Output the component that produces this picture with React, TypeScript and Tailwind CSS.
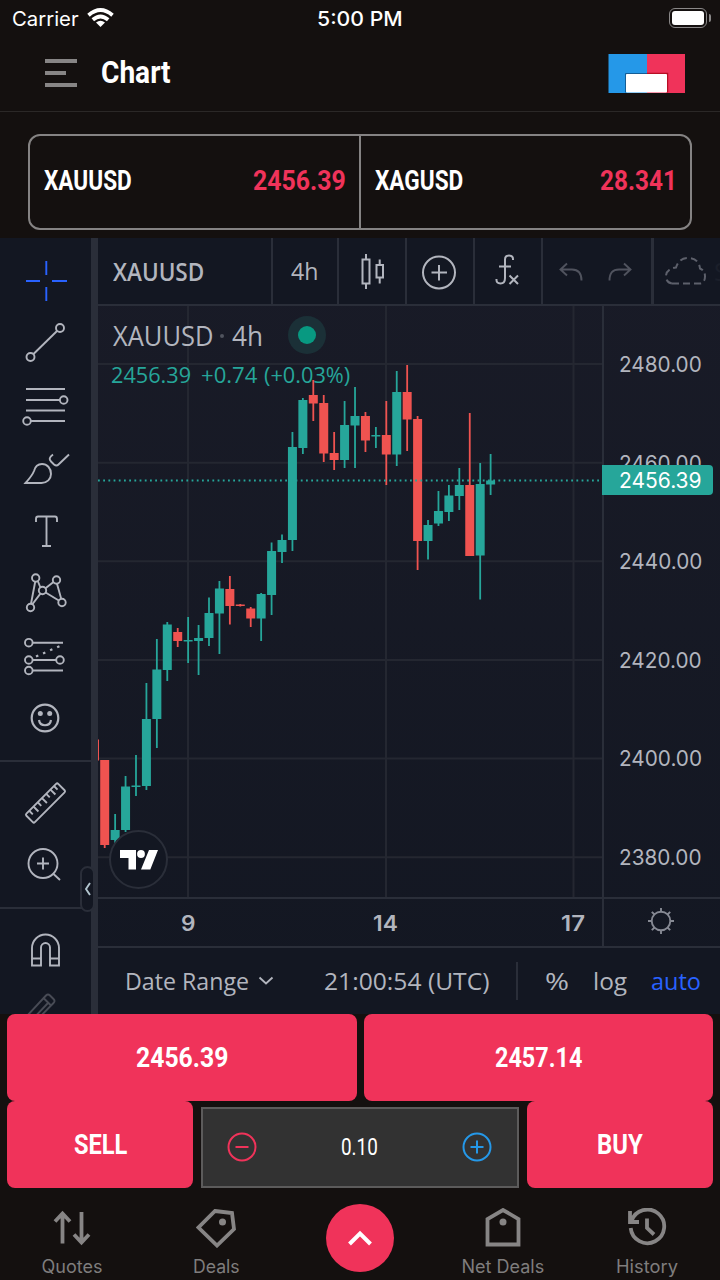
import React, { useLayoutEffect, useRef, useState } from 'react';

interface FitTextProps {
  width: number;
  className?: string;
  children: React.ReactNode;
}

// Squeezes a line of text horizontally so it takes exactly `width` pixels
const FitText: React.FC<FitTextProps> = ({ width, className = '', children }) => {
  const ref = useRef<HTMLSpanElement>(null);
  const [scale, setScale] = useState(1);

  useLayoutEffect(() => {
    if (ref.current && ref.current.offsetWidth > 0) {
      setScale(width / ref.current.offsetWidth);
    }
  }, [width, children]);

  return (
    <span className="flex shrink-0" style={{ width }}>
      <span
        ref={ref}
        className={`block shrink-0 origin-left whitespace-pre ${className}`}
        style={{ transform: `scaleX(${scale})` }}
      >
        {children}
      </span>
    </span>
  );
};

// x step between candles and the first candle's centre, inside the plot
const STEP = 10.43;
const FIRST = 6.7;

// [up, high, body top, body bottom, low]
const candles: [number, number, number, number, number][] = [
  [0, 760, 760, 845, 848],
  [1, 814, 830, 840, 843],
  [1, 776, 786.5, 830, 832],
  [1, 755, 785.5, 787, 796],
  [1, 683, 719, 786, 790],
  [1, 639, 669.5, 719, 748],
  [1, 622, 624.5, 670, 681],
  [0, 628, 632, 641, 647],
  [1, 617, 640, 641.5, 663],
  [1, 625, 638, 641, 675],
  [1, 597.5, 613, 638, 646],
  [1, 581, 588.5, 613.5, 654],
  [0, 576, 589, 606, 624.5],
  [0, 604, 604.5, 606, 606.5],
  [0, 607, 608.5, 618.5, 627],
  [1, 593, 594, 618.5, 641],
  [1, 542.5, 551, 595, 615],
  [1, 534.5, 540, 552, 563],
  [1, 432, 447, 540, 551],
  [1, 398, 400, 448, 454],
  [0, 380, 395, 403.5, 421],
  [0, 395, 403, 453.5, 462],
  [0, 432, 453, 460, 470],
  [1, 401, 425, 460, 468],
  [1, 387, 416, 425.5, 468],
  [0, 412, 416, 440.5, 452],
  [1, 427, 435, 436.5, 448],
  [0, 401, 435, 454.5, 485],
  [1, 371, 392, 454.5, 466],
  [0, 365, 392, 419.5, 451],
  [0, 416, 419, 541, 570],
  [1, 520, 525, 541, 559.5],
  [1, 491, 511, 523.5, 526],
  [1, 485, 495.5, 512, 521],
  [1, 468, 485, 496, 510],
  [0, 413, 485, 556, 556],
  [1, 463, 484, 555.5, 599.5],
  [1, 454, 480.5, 484.5, 495],
];

const gridRows = [364, 462.7, 561.3, 660, 758.6, 857.2];
const gridCols = [90, 288, 475.5];
const prices = ['2480.00', '2460.00', '2440.00', '2420.00', '2400.00', '2380.00'];

const CandleChart: React.FC = () => (
  <svg className="block h-[591px] w-[504px]" viewBox="0 306 504 591">
    {gridRows.map((y) => (
      <line key={y} x1="0" x2="504" y1={y} y2={y} stroke="#242731" strokeWidth="2" />
    ))}
    {gridCols.map((x) => (
      <line key={x} x1={x} x2={x} y1="306" y2="897" stroke="#242731" strokeWidth="2" />
    ))}
    <rect x="0" y="739.5" width="1" height="21" fill="#ef5350" />
    {candles.map(([up, high, top, bottom, low], i) => {
      const x = FIRST + i * STEP;
      return (
        <g key={i} fill={up ? '#26a69a' : '#ef5350'}>
          <rect x={x - 0.9} y={high} width="1.8" height={low - high} />
          <rect x={x - 4.5} y={top} width="9" height={bottom - top} />
        </g>
      );
    })}
    <line x1="0" x2="504" y1="480.5" y2="480.5" stroke="#26a69a" strokeWidth="1.8" strokeDasharray="1.8 3.4" />
  </svg>
);

const ToolIcon: React.FC<{ children: React.ReactNode; className?: string }> = ({ children, className = '' }) => (
  <div className={`flex h-[62.5px] shrink-0 items-center pl-[18px] ${className}`}>
    <svg
      className="h-14 w-14 overflow-visible"
      viewBox="-28 -28 56 56"
      fill="none"
      stroke="currentColor"
      strokeWidth="1.9"
    >
      {children}
    </svg>
  </div>
);

const LeftToolbar: React.FC = () => (
  <div className="relative h-[776px] w-[91px] shrink-0 overflow-hidden bg-[#131722] text-[#b2b5be]">
    <div className="h-[524px] border-b-2 border-[#2a2e39] pt-[11.5px]">
      <ToolIcon className="text-[#2962ff]">
        <path d="M0.3-20v14M0.3 6v14M-20 0h14M6 0h15" />
      </ToolIcon>
      <ToolIcon>
        <circle cx="14" cy="-15" r="4" />
        <circle cx="-15.5" cy="14" r="4" />
        <path d="M-12.5 11L11-12" />
      </ToolIcon>
      <ToolIcon>
        <path d="M-20-17h39M-20-6h34M-20 4.5h39M-15 15h34" />
        <circle cx="17.7" cy="-6" r="3.8" />
        <circle cx="-19" cy="15" r="3.8" />
      </ToolIcon>
      <ToolIcon>
        <path d="M-20.5 15h16C1 15 5 11 5 6C5 0 1-4-4-4c-5 0-7 3-8 7c-2 5-5 8-8.5 12z" />
        <path d="M7-13.500c-4 3-4 5-2 7l3 3c2 1.500 3 1.500 4.500 0L23-13.500" />
      </ToolIcon>
      <ToolIcon>
        <path d="M-10-9v-3q0-2.500 2-2.500h17q2 0 2 2.500v3M0.500-14.500V15M-4 15h9" />
      </ToolIcon>
      <ToolIcon>
        <circle cx="-10.3" cy="-15" r="3.7" />
        <circle cx="10.5" cy="-13" r="3.7" />
        <circle cx="-3.5" cy="-2.5" r="3.7" />
        <circle cx="-15.5" cy="14.5" r="3.7" />
        <circle cx="16" cy="9.5" r="3.7" />
        <path d="M-10.800-11.300l-4.200 22M-8.200-12l2.600 6.500M-0.500-4.700l8-6.200M11-9.300l4.200 15M-0.400-0.500l13.200 8M-5.600 0.600l-8 10.600" />
      </ToolIcon>
      <ToolIcon>
        <circle cx="-17.2" cy="-13.3" r="3.8" />
        <circle cx="-17.2" cy="4" r="3.8" />
        <circle cx="14" cy="4" r="3.8" />
        <circle cx="-17.2" cy="14.5" r="3.8" />
        <path d="M-13-13.300h30M-13 4h23M-13 14.500h30" />
        <path d="M-10 0.500L15-10.500" strokeDasharray="2.5 5.2" strokeWidth="2.2" />
      </ToolIcon>
      <ToolIcon>
        <circle cx="-1" cy="0" r="13.3" strokeWidth="2.2" />
        <circle cx="-5.7" cy="-4.6" r="2.5" fill="currentColor" stroke="none" />
        <circle cx="3.7" cy="-4.6" r="2.5" fill="currentColor" stroke="none" />
        <path d="M-7 2c1 7 11 7 12 0" strokeWidth="2.2" />
      </ToolIcon>
    </div>
    <div className="h-[147px] border-b-2 border-[#2a2e39] pt-[10px]">
      <ToolIcon>
        <g transform="translate(-0.5 0) rotate(-45)">
          <rect x="-22.5" y="-6" width="45" height="12" rx="1.5" />
          <path d="M-17-6v5M-11-6v7M-5-6v5M1-6v7M7-6v5M13-6v7M18-6v5" />
        </g>
      </ToolIcon>
      <ToolIcon>
        <circle cx="-3" cy="-2.5" r="14.5" />
        <path d="M-9-2.500h12M-3-8.500v12M7.500 8L14 14" />
      </ToolIcon>
    </div>
    <div className="pt-[10px]">
      <ToolIcon>
        <path d="M-14 15.500V-2A13.500 13.500 0 0 1 13 -2V15.500H4V-2.500A4.500 4.500 0 0 0-5-2.500V15.500zM-14 8.500h9M4 8.500h9" />
      </ToolIcon>
      <ToolIcon className="text-[#484b55]">
        <path d="M-20 4L0-17.500q2-2 4 0l3.500 3.500q2 2 0 4L-14 12M-2-14.500l7 7M-15 8L2-10" />
      </ToolIcon>
    </div>
  </div>
);

const SheetToolbar: React.FC = () => (
  <div className="flex h-[68px] border-b-2 border-[#2a2e39] bg-[#131722] font-['Open_Sans',sans-serif] text-[#b2b5be]">
    <div className="flex w-[175px] items-center border-r-2 border-[#2a2e39] pl-[15px]">
      <FitText width={91} className="text-[25px] leading-8 font-semibold">XAUUSD</FitText>
    </div>
    <div className="flex w-[66px] items-center border-r-2 border-[#2a2e39] pl-[18px]">
      <FitText width={27} className="text-[24px] leading-8 font-medium">4h</FitText>
    </div>
    <div className="flex w-[68px] items-center justify-center border-r-2 border-[#2a2e39]">
      <svg className="h-10 w-8" viewBox="0 0 32 40" fill="none" stroke="currentColor" strokeWidth="2">
        <path d="M6.500 8.500h7v24h-7zM10 3v5.500M10 32.500V38M20.500 14h6.500v12.500h-6.500zM23.700 8.500V14M23.700 26.500V32.500" />
      </svg>
    </div>
    <div className="flex w-[68px] items-center justify-center border-r-2 border-[#2a2e39] pt-px pr-0.5">
      <svg className="h-9 w-9" viewBox="0 0 36 36" fill="none" stroke="currentColor" strokeWidth="2">
        <circle cx="18" cy="18.5" r="16" />
        <path d="M10.500 18.500h15.500M18 11v15.500" />
      </svg>
    </div>
    <div className="flex w-[68px] items-center justify-center border-r-2 border-[#2a2e39]">
      <svg className="h-9 w-8" viewBox="0 0 32 36" fill="none" stroke="currentColor" strokeWidth="2">
        <path d="M21 7V6q0-3.500-4-3.500T13 6.500V25q0 5.500-4.500 5.500T4.500 26M7 13.500h12M17.500 22.500l8.500 8.500M26 22.500l-8.500 8.500" />
      </svg>
    </div>
    <div className="flex w-[111px] items-center gap-[25px] border-r-[3px] border-[#2a2e39] pt-[3px] pl-[16px] text-[#50535e]">
      <svg className="h-6 w-6" viewBox="0 0 24 24" fill="none" stroke="currentColor" strokeWidth="1.9">
        <path d="M8 2.500L1.500 8.500L8 14.500M1.500 8.500H13q9.500 0 9.500 11" />
      </svg>
      <svg className="h-6 w-6" viewBox="0 0 24 24" fill="none" stroke="currentColor" strokeWidth="1.9">
        <path d="M16 2.500l6.500 6L16 14.500M22.500 8.500H11q-9.500 0-9.500 11" />
      </svg>
    </div>
    <div className="flex flex-1 items-center gap-1.5 overflow-hidden pl-2.5">
      <svg className="h-9 w-11 shrink-0" viewBox="0 0 44 36" fill="none" stroke="#5d606b" strokeWidth="2" strokeDasharray="7 4">
        <path d="M8 30.500h28q5-1 5-7t-5-8q-1-10-12-10.500q-9 0-12 9.500q-9 1-10 8q0 7.500 6 8" />
      </svg>
      <span className="text-[25px] leading-8 text-[#1b1f2a]">S</span>
    </div>
  </div>
);

const ChartPane: React.FC = () => (
  <div className="flex h-[591px]">
    <div className="relative w-[506px] border-r-2 border-[#2a2e39]">
      <CandleChart />
      <div className="absolute top-[12px] left-[15px] font-['Open_Sans',sans-serif]">
        <div className="flex h-9 items-center text-[27px] leading-9 text-[#b2b5be]">
          <FitText width={100}>XAUUSD</FitText>
          <span className="mr-[8px] ml-[7px] size-1 rounded-full bg-[#50535e]" />
          <FitText width={31}>4h</FitText>
          <span className="-mt-0.5 ml-[25px] flex size-[38px] items-center justify-center rounded-full bg-[#1b3037]">
            <span className="size-[18px] rounded-full bg-[#089981]" />
          </span>
        </div>
        <div className="-ml-[2px] flex h-[42px] items-center text-[22.5px] text-[#26a69a]">
          <FitText width={80}>2456.39</FitText>
          <span className="w-2.5" />
          <FitText width={56}>+0.74</FitText>
          <span className="w-[7px]" />
          <FitText width={86}>(+0.03%)</FitText>
        </div>
      </div>
      <div className="absolute top-[524px] left-[11px] flex size-[59px] items-center justify-center rounded-full border-2 border-[#2a2e39] bg-[#131722]">
        <svg className="h-5 w-[38px]" viewBox="0 0 38 20" fill="#fff">
          <path d="M0 0h16v19.500H8.500V8H0zM21 19.500h9.300L38 0h-9z" />
          <circle cx="21" cy="4" r="3.9" />
        </svg>
      </div>
    </div>
    <div className="relative flex-1 font-['Inter',sans-serif] text-[21px] text-[#b2b5be]">
      <div className="flex flex-col gap-[66.6px] pt-[43px] pl-[15px]">
        {prices.map((price) => (
          <FitText key={price} width={83} className="leading-8">
            {price}
          </FitText>
        ))}
      </div>
      <div className="absolute top-[159px] -left-[2px] flex h-[30px] w-[111px] items-center rounded-r bg-[#26a69a] pt-px pl-[17px] text-white">
        <FitText width={83} className="leading-[30px]">2456.39</FitText>
      </div>
    </div>
  </div>
);

const TimeAxis: React.FC = () => (
  <div className="flex h-[51px] border-y-2 border-[#2a2e39] font-['Inter',sans-serif] text-[21px] font-semibold text-[#b2b5be]">
    <div className="flex w-[506px] items-center border-r-2 border-[#2a2e39] pt-0.5">
      <span className="w-[82.5px]" />
      <FitText width={14}>9</FitText>
      <span className="w-[178.5px]" />
      <FitText width={25}>14</FitText>
      <span className="w-[163px]" />
      <FitText width={24}>17</FitText>
    </div>
    <div className="flex flex-1 items-center justify-center pr-[3px] pb-[3px]">
      <svg className="h-8 w-8" viewBox="-16 -16 32 32" fill="none" stroke="#868993" strokeWidth="1.9">
        <circle r="9.3" />
        <path d="M0-13v4M0 9v4M-13 0h4M9 0h4M-9.200-9.200l2.700 2.700M9.200-9.200L6.500-6.500M-9.200 9.200l2.700-2.700M9.200 9.200L6.500 6.500" />
      </svg>
    </div>
  </div>
);

const BottomToolbar: React.FC = () => (
  <div className="flex h-[66px] items-center bg-[#131722] pl-[27px] font-['Open_Sans',sans-serif] text-[23px] leading-8 text-[#b2b5be]">
    <FitText width={124}>Date Range</FitText>
    <svg className="ml-[9px] h-3 w-4" viewBox="0 0 16 12" fill="none" stroke="currentColor" strokeWidth="1.9">
      <path d="M1.500 2.500L8 8.500l6.500-6" />
    </svg>
    <span className="w-[50px]" />
    <FitText width={165}>21:00:54 (UTC)</FitText>
    <span className="ml-[27px] h-[38px] w-0.5 bg-[#2a2e39]" />
    <span className="w-[27px]" />
    <FitText width={24}>%</FitText>
    <span className="w-[24px]" />
    <FitText width={34}>log</FitText>
    <span className="w-[24px]" />
    <FitText width={50} className="text-[#2962ff]">auto</FitText>
  </div>
);

const navItems = [
  {
    label: 'Quotes',
    width: 61,
    icon: <path d="M-9.500 15.500V-13M-17-6.500l7.500-8l7.500 8M9.500-16V12.500M2 6.500l7.500 8l7.500-8" />,
  },
  {
    label: 'Deals',
    width: 47,
    icon: (
      <>
        <path d="M-1-17L16-15L18 1L1 17.500L-17.500-0.500z" />
        <circle cx="6.5" cy="-6" r="3.5" fill="currentColor" stroke="none" />
      </>
    ),
  },
  { label: '', width: 0, icon: null },
  {
    label: 'Net Deals',
    width: 83,
    icon: (
      <>
        <path d="M-15.500 16.500V-9L0-18L15.500-9V16.500z" />
        <circle cx="0" cy="-6" r="3.5" fill="currentColor" stroke="none" />
      </>
    ),
  },
  {
    label: 'History',
    width: 62,
    icon: <path d="M-17-17v11h9M-15.500-7A16.800 16.800 0 1 1-16.300 0M0-9.500V0L7 6.500" />,
  },
];

const condensed = "font-['Roboto',sans-serif]";

export default function App() {
  return (
    <div className="flex h-[1280px] w-[720px] flex-col overflow-hidden bg-[#14100f] text-white">
      {/* Status bar */}
      <div className="grid h-9 grid-cols-3 items-center pl-3 font-['Inter',sans-serif] text-[20px]">
        <div className="flex items-center gap-2">
          <span className="pt-px">
            <FitText width={67}>Carrier</FitText>
          </span>
          <svg className="h-5 w-[27px]" viewBox="0 0 27 20" fill="none" stroke="#fff" strokeWidth="3.8">
            <path d="M1.500 7.200Q13.500-3.200 25.500 7.200M5.800 11.800Q13.500 5.200 21.200 11.800" />
            <path d="M9 14.500Q13.500 11 18 14.500L13.500 19z" fill="#fff" stroke="none" />
          </svg>
        </div>
        <div className="flex justify-center pt-px pr-3">
          <FitText width={86} className="font-medium">5:00 PM</FitText>
        </div>
        <div className="flex items-center justify-end gap-0.5 pr-[9px]">
          <span className="h-5 w-[38px] rounded-md border border-[#8a8888] p-0.5">
            <span className="block h-full rounded-[3px] bg-white" />
          </span>
          <span className="h-2 w-0.5 rounded-r bg-[#8a8888]" />
        </div>
      </div>

      {/* Header */}
      <div className="flex h-[76px] items-center border-b border-[#2b2827] pr-[34px] pl-[45px]">
        <div className="flex flex-col gap-2 pb-px">
          <span className="h-1 w-8 bg-[#878585]" />
          <span className="h-1 w-[21px] bg-[#878585]" />
          <span className="h-1 w-8 bg-[#878585]" />
        </div>
        <span className="w-6" />
        <span className="pb-0.5">
          <FitText width={70} className={`text-[30.5px] leading-9 font-bold ${condensed}`}>Chart</FitText>
        </span>
        <svg className="ml-auto h-10 w-[78px]" viewBox="0 0.500 78 40">
          <rect x="0.5" y="0.5" width="39" height="39" fill="#2598e8" />
          <rect x="39" y="0.5" width="38" height="39" fill="#f0335a" />
          <path d="M17.500 39V20h21.500" fill="none" stroke="#145d95" />
          <path d="M39 20h20.500v19" fill="none" stroke="#b80d24" strokeWidth="1.5" />
          <rect x="18" y="20.5" width="41" height="18.5" rx="1" fill="#fff" />
        </svg>
      </div>

      {/* Ticker */}
      <div className="mx-7 mt-[22px] flex h-24 shrink-0 rounded-xl border-2 border-[#858383] text-[27.5px] leading-9 font-bold">
        <div className="flex w-[331px] items-center justify-between border-r-2 border-[#858383] pr-[13px] pb-0.5 pl-[13.5px]">
          <FitText width={88} className={condensed}>XAUUSD</FitText>
          <FitText width={93} className={`text-[#f0335a] ${condensed}`}>2456.39</FitText>
        </div>
        <div className="flex flex-1 items-center justify-between pr-[13px] pb-0.5 pl-[14px]">
          <FitText width={88} className={condensed}>XAGUSD</FitText>
          <FitText width={77} className={`text-[#f0335a] ${condensed}`}>28.341</FitText>
        </div>
      </div>

      {/* Chart */}
      <div className="relative mt-2 flex h-[776px] shrink-0">
        <LeftToolbar />
        <div className="w-[7px] shrink-0 bg-[#2a2e39]" />
        <div className="flex min-w-0 flex-1 flex-col bg-linear-to-b from-[#191b27] to-[#131722]">
          <SheetToolbar />
          <ChartPane />
          <TimeAxis />
          <BottomToolbar />
        </div>
        <div className="absolute top-[628px] left-20 flex h-[46px] w-[15px] items-center justify-center rounded-lg border-2 border-[#2a2e39] bg-[#131722]">
          <svg className="h-3.5 w-2" viewBox="0 0 8 14" fill="none" stroke="#b2c5ce" strokeWidth="1.9">
            <path d="M6 1L2 7l4 6" />
          </svg>
        </div>
      </div>

      {/* Order panel */}
      <div className={`px-[7px] text-[28.5px] leading-9 font-bold ${condensed}`}>
        <div className="flex gap-[7px]">
          <button className="flex h-[87px] flex-1 items-center justify-center rounded-lg bg-[#f0335a]">
            <FitText width={92}>2456.39</FitText>
          </button>
          <button className="flex h-[87px] flex-1 items-center justify-center rounded-lg bg-[#f0335a]">
            <FitText width={87}>2457.14</FitText>
          </button>
        </div>
        <div className="flex items-end justify-between">
          <button className="flex h-[87px] w-[186px] items-center justify-center rounded-lg bg-[#f0335a]">
            <FitText width={53}>SELL</FitText>
          </button>
          <div className="flex h-[81px] w-[318px] items-center justify-between border-2 border-[#5c5b5b] bg-[#323232] px-6 pb-0.5">
            <svg className="-ml-px h-8 w-8" viewBox="-16 -16 32 32" fill="none" stroke="#f0335a" strokeWidth="2">
              <circle r="13.5" />
              <path d="M-6.500 0h13" />
            </svg>
            <FitText width={37} className="text-[24px] font-normal">0.10</FitText>
            <svg className="h-8 w-8" viewBox="-16 -16 32 32" fill="none" stroke="#2598e8" strokeWidth="2">
              <circle r="13.5" />
              <path d="M-6.500 0h13M0-6.500v13" />
            </svg>
          </div>
          <button className="flex h-[87px] w-[186px] items-center justify-center rounded-lg bg-[#f0335a]">
            <FitText width={46}>BUY</FitText>
          </button>
        </div>
      </div>

      {/* Tab bar */}
      <div className="grid h-[92px] shrink-0 grid-cols-5 font-['Inter',sans-serif] text-[18px] text-[#7f7d7d]">
        {navItems.map((item, i) =>
          item.icon ? (
            <div key={i} className={`flex flex-col items-center pt-5 ${i > 2 ? 'pr-0.5' : ''}`}>
              <svg
                className="h-10 w-10 text-[#878585]"
                viewBox="-20 -20 40 40"
                fill="none"
                stroke="currentColor"
                strokeWidth="3.8"
              >
                {item.icon}
              </svg>
              <span className="pt-[7px]">
                <FitText width={item.width} className="leading-6">{item.label}</FitText>
              </span>
            </div>
          ) : (
            <div key={i} className="flex justify-center pt-4">
              <div className="flex size-[68px] items-center justify-center rounded-full bg-[#f0335a]">
                <svg className="h-4 w-6" viewBox="0 0 24 16" fill="none" stroke="#fff" strokeWidth="4">
                  <path d="M1.500 14L12 3.500L22.500 14" />
                </svg>
              </div>
            </div>
          )
        )}
      </div>
    </div>
  );
}
